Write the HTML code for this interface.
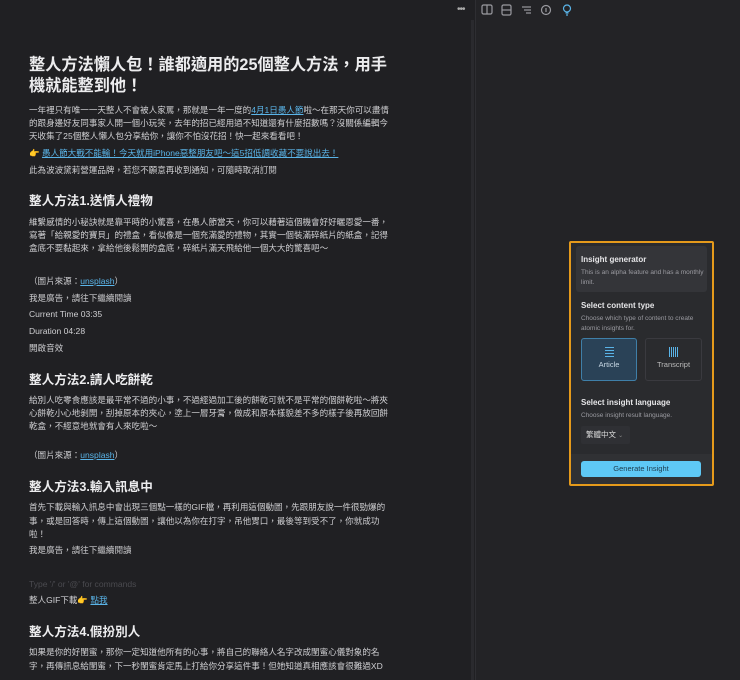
<!DOCTYPE html>
<html><head><meta charset="utf-8"><style>
body{margin:0;width:740px;height:680px;background:#232326;overflow:hidden;font-family:"Liberation Sans","Noto Sans CJK TC",sans-serif;position:relative}
#left{position:absolute;left:0;top:0;width:475px;height:680px;background:#202023;border-right:1px solid #2e2e32}
.l{position:absolute;left:29px;white-space:nowrap;color:#cfcfd2;font-size:8.55px;line-height:14px}
.h1{font-size:16.2px;font-weight:bold;color:#ececee;line-height:22px}
.h2{font-size:12.6px;font-weight:bold;color:#ececee;line-height:20px}
a{color:#5ab4e8;text-decoration:underline}
.ph{color:#4a4a4f}
#sb{position:absolute;left:471px;top:20px;width:3px;height:660px;background:#2a2a2e}
#panel{position:absolute;left:569px;top:241px;width:141px;height:241px;border:2px solid #e59a1b;border-radius:2px;background:#2a2b2e;font-size:7px;color:#c8c8cc}
.t{position:absolute;left:10px;white-space:nowrap}
.b{font-weight:bold;color:#e6e6e8;font-size:8px}
.s{color:#9a9aa0;font-size:6.5px;line-height:10px}
</style></head><body>
<div id="left">
<div class="l h1" style="top:54px">整人方法懶人包！誰都適用的25個整人方法，用手</div>
<div class="l h1" style="top:75px">機就能整到他！</div>
<div class="l" style="top:103px">一年裡只有唯一一天整人不會被人家罵，那就是一年一度的<a>4月1日愚人節</a>啦～在那天你可以盡情</div>
<div class="l" style="top:116px">的跟身邊好友同事家人開一個小玩笑，去年的招已經用過不知道還有什麼招數嗎？沒關係編輯今</div>
<div class="l" style="top:129px">天收集了25個整人懶人包分享給你，讓你不怕沒花招！快一起來看看吧！</div>
<div class="l" style="top:146px">👉 <a>愚人節大戰不能輸！今天就用iPhone惡整朋友吧～這5招低調收藏不要說出去！</a></div>
<div class="l" style="top:163px">此為波波黛莉營運品牌，若您不願意再收到通知，可隨時取消訂閱</div>
<div class="l h2" style="top:191px">整人方法1.送情人禮物</div>
<div class="l" style="top:215px">維繫感情的小秘訣就是靠平時的小驚喜，在愚人節當天，你可以藉著這個機會好好曬恩愛一番，</div>
<div class="l" style="top:228px">寫著「給親愛的寶貝」的禮盒，看似像是一個充滿愛的禮物，其實一個裝滿碎紙片的紙盒，記得</div>
<div class="l" style="top:241px">盒底不要黏起來，拿給他後鬆開的盒底，碎紙片滿天飛給他一個大大的驚喜吧～</div>
<div class="l" style="top:274px">（圖片來源：<a>unsplash</a>）</div>
<div class="l" style="top:291px">我是廣告，請往下繼續閱讀</div>
<div class="l" style="top:307px">Current Time 03:35</div>
<div class="l" style="top:324px">Duration 04:28</div>
<div class="l" style="top:341px">開啟音效</div>
<div class="l h2" style="top:370px">整人方法2.請人吃餅乾</div>
<div class="l" style="top:393px">給別人吃零食應該是最平常不過的小事，不過經過加工後的餅乾可就不是平常的個餅乾啦～將夾</div>
<div class="l" style="top:406px">心餅乾小心地剝開，刮掉原本的夾心，塗上一層牙膏，做成和原本樣貌差不多的樣子後再放回餅</div>
<div class="l" style="top:419px">乾盒，不經意地就會有人來吃啦～</div>
<div class="l" style="top:448px">（圖片來源：<a>unsplash</a>）</div>
<div class="l h2" style="top:477px">整人方法3.輸入訊息中</div>
<div class="l" style="top:500px">首先下載與輸入訊息中會出現三個點一樣的GIF檔，再利用這個動圖，先跟朋友說一件很勁爆的</div>
<div class="l" style="top:514px">事，或是回答時，傳上這個動圖，讓他以為你在打字，吊他胃口，最後等到受不了，你就成功</div>
<div class="l" style="top:527px">啦！</div>
<div class="l" style="top:543px">我是廣告，請往下繼續閱讀</div>
<div class="l ph" style="top:577px">Type '/' or '@' for commands</div>
<div class="l" style="top:593px">整人GIF下載👉 <a>點我</a></div>
<div class="l h2" style="top:622px">整人方法4.假扮別人</div>
<div class="l" style="top:645px">如果是你的好閨蜜，那你一定知道他所有的心事，將自己的聯絡人名字改成閨蜜心儀對象的名</div>
<div class="l" style="top:659px">字，再傳訊息給閨蜜，下一秒閨蜜肯定馬上打給你分享這件事！但她知道真相應該會很難過XD</div>
<div id="sb"></div>
</div>
<div style="position:absolute;left:457px;top:4px;color:#aaa;font-size:10px;letter-spacing:-1px">•••</div>
<svg style="position:absolute;left:480px;top:3px" width="100" height="14" viewBox="0 0 100 14" fill="none" stroke="#9a9aa0" stroke-width="1.2">
<rect x="2" y="2" width="10" height="9" rx="1.5"/><line x1="7" y1="2" x2="7" y2="11"/>
<rect x="22" y="2" width="9" height="10" rx="1.5"/><line x1="22" y1="7" x2="31" y2="7"/>
<line x1="42" y1="4" x2="51" y2="4"/><line x1="44" y1="7" x2="51" y2="7"/><line x1="46" y1="10" x2="51" y2="10"/>
<circle cx="66" cy="7" r="4.5"/><line x1="66" y1="5" x2="66" y2="9"/>
<g stroke="#5ab4e8"><circle cx="87" cy="5.5" r="3.5"/><line x1="85.5" y1="10" x2="88.5" y2="10"/><line x1="86" y1="12" x2="88" y2="12"/></g>
</svg>
<div id="panel">
<div style="position:absolute;left:5px;top:3px;width:131px;height:46px;background:#343539;border-radius:3px"></div>
<div class="t b" style="top:12px">Insight generator</div>
<div class="t s" style="top:25px">This is an alpha feature and has a monthly<br>limit.</div>
<div class="t b" style="top:58px">Select content type</div>
<div class="t s" style="top:71px">Choose which type of content to create<br>atomic insights for.</div>
<div style="position:absolute;left:10px;top:95px;width:54px;height:41px;border:1px solid #3f7fa8;background:#2a4257;border-radius:3px;text-align:center;color:#c8d8e4;font-size:7.5px"><div style="margin:8px auto 3px;width:9px;height:10px;background:repeating-linear-gradient(#5ab4e8 0 1px,transparent 1px 3px)"></div>Article</div>
<div style="position:absolute;left:74px;top:95px;width:55px;height:41px;border:1px solid #3a3a3f;border-radius:3px;text-align:center;color:#bbb;font-size:7.5px"><div style="margin:8px auto 3px;width:10px;height:10px;background:repeating-linear-gradient(90deg,#5ab4e8 0 1px,transparent 1px 2px)"></div>Transcript</div>
<div class="t b" style="top:155px">Select insight language</div>
<div class="t s" style="top:168px">Choose insight result language.</div>
<div style="position:absolute;left:10px;top:183px;width:49px;height:18px;background:#2f3034;border-radius:2px;color:#ddd;font-size:7.5px;line-height:18px;padding-left:5px;box-sizing:border-box">繁體中文 <span style="color:#888;font-size:6px">⌄</span></div>
<div style="position:absolute;left:0;top:211px;width:141px;height:30px;background:#303134"></div>
<div style="position:absolute;left:10px;top:218px;width:120px;height:16px;background:#5ec8f5;border-radius:3px;color:#1d3b4d;font-size:7.5px;text-align:center;line-height:16px">Generate Insight</div>
</div>
</body></html>
